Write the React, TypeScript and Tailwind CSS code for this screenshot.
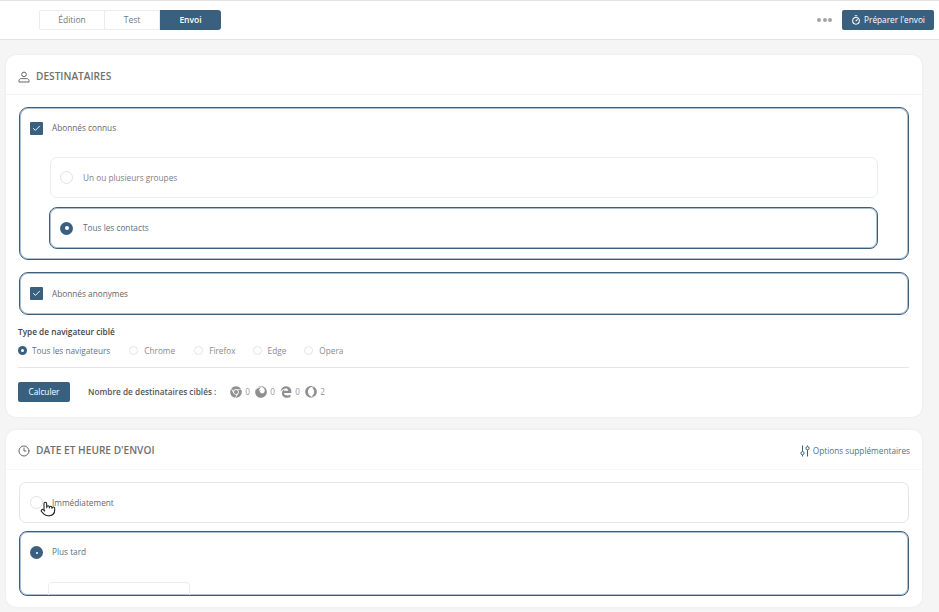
import { Check, Clock3, Pointer, Timer } from "lucide-react";
import { FaChrome, FaEdgeLegacy, FaFirefox, FaOpera } from "react-icons/fa";

function Radio({ checked }: { checked?: boolean }) {
  if (checked) {
    return (
      <span className="w-[13px] h-[13px] rounded-full bg-[#3a6080] flex items-center justify-center shrink-0">
        <span className="w-[4px] h-[4px] rounded-full bg-white" />
      </span>
    );
  }
  return <span className="w-[13px] h-[13px] rounded-full border border-[#e2e2e2] bg-white shrink-0" />;
}

function Checkbox() {
  return (
    <span className="w-[13px] h-[13px] rounded-[1px] bg-[#3a6080] flex items-center justify-center shrink-0">
      <Check size={9} color="white" strokeWidth={2.5} />
    </span>
  );
}

function Count({ value }: { value: number }) {
  return <span className="ml-[3px] mr-[5px] w-[5px]">{value}</span>;
}

function Label({ children }: { children: string }) {
  return <span className="pt-[2px]">{children}</span>;
}

export default function App() {
  const browsers = [
    { label: "Chrome", w: "mr-[19px]" },
    { label: "Firefox", w: "mr-[17px]" },
    { label: "Edge", w: "mr-[18px]" },
    { label: "Opera", w: "" },
  ];

  return (
    <div
      className="h-[612px] overflow-hidden bg-[#f5f5f5] text-[#666] relative"
      style={{ fontFamily: '"Open Sans", sans-serif' }}
    >
      {/* barre du haut */}
      <div className="h-[40px] bg-white border-t border-b border-[#e3e3e3] flex items-center justify-between pl-[39px] pr-[5px]">
        <div className="flex h-[20px] text-[8.5px]">
          <div className="w-[66px] flex items-center justify-center border border-[#ececec] rounded-l-[2px] text-[#777]">Édition</div>
          <div className="w-[55px] flex items-center justify-center border-y border-r border-[#ececec] text-[#777]">Test</div>
          <div className="w-[61px] flex items-center justify-center bg-[#3a6080] rounded-r-[3px] text-white font-semibold">Envoi</div>
        </div>
        <div className="flex items-center">
          <div className="flex gap-[1.5px] mr-[10px]">
            <span className="w-[4px] h-[4px] rounded-full bg-[#a3a3a3]" />
            <span className="w-[4px] h-[4px] rounded-full bg-[#a3a3a3]" />
            <span className="w-[4px] h-[4px] rounded-full bg-[#a3a3a3]" />
          </div>
          <button className="w-[92px] h-[20px] rounded-[2px] bg-[#3a6080] text-white text-[8.25px] flex items-center justify-center gap-[3px]">
            <Timer size={10} strokeWidth={2.5} />
            Préparer l'envoi
          </button>
        </div>
      </div>

      <div className="pl-[6px] pr-[17px] pt-[15px]">
        {/* destinataires */}
        <section className="h-[362px] bg-white rounded-[10px] shadow-[0_0_3px_rgba(0,0,0,0.06)]">
          <div className="h-[40px] pt-[4px] border-b border-[#f2f2f2] flex items-center pl-[12px] gap-[6px]">
            <svg width="12" height="12" viewBox="0 0 12 12" fill="none" stroke="#666" strokeWidth="1">
              <circle cx="6" cy="3.4" r="2.3" />
              <path d="M1 11V9.6C1 8.4 2 7.6 3.2 7.6H8.8C10 7.6 11 8.4 11 9.6V11Z" strokeLinejoin="round" />
            </svg>
            <h2 className="text-[10.15px] font-semibold text-[#70706c]">DESTINATAIRES</h2>
          </div>
          <div className="px-[13px] pt-[12px]">
            <div className="h-[153px] border border-[#3a6080] shadow-[inset_0_0_0_1px_rgba(58,96,128,0.4)] rounded-[9px] pl-[10px] pr-[30px] pt-[14px]">
              <div className="flex items-center gap-[9px] h-[13px] text-[8.25px]">
                <Checkbox />
                Abonnés connus
              </div>
              <div className="ml-[20px] mt-[22px] h-[41px] border border-[#ececec] rounded-[7px] flex items-center pl-[9px] gap-[10px] text-[8.25px] text-[#808080]">
                <Radio />
                <Label>Un ou plusieurs groupes</Label>
              </div>
              <div className="ml-[19px] mt-[9px] h-[42px] border border-[#3a6080] shadow-[inset_0_0_0_1px_rgba(58,96,128,0.4)] rounded-[8px] flex items-center pl-[10px] gap-[10px] text-[8.25px] text-[#557085]">
                <Radio checked />
                Tous les contacts
              </div>
            </div>
            <div className="mt-[12px] h-[43px] border border-[#3a6080] shadow-[inset_0_0_0_1px_rgba(58,96,128,0.4)] rounded-[9px] flex items-center pl-[10px] gap-[9px] text-[8.25px]">
              <Checkbox />
              <Label>Abonnés anonymes</Label>
            </div>
            <p className="mt-[11px] text-[8.25px] font-semibold text-[#444] -ml-px">Type de navigateur ciblé</p>
            <div className="mt-[6px] -ml-px flex items-center h-[13px] text-[8.25px] text-[#8a8a8a]">
              <span className="mr-[5px] w-[9px] h-[9px] rounded-full bg-[#3a6080] flex items-center justify-center">
                <span className="w-[3px] h-[3px] rounded-full bg-white" />
              </span>
              <span className="text-[#5f7484] mr-[19px]">Tous les navigateurs</span>
              {browsers.map((b) => (
                <div key={b.label} className={`flex items-center gap-[6px] ${b.w}`}>
                  <span className="w-[9px] h-[9px] rounded-full border border-[#e4e4e4]" />
                  {b.label}
                </div>
              ))}
            </div>
            <div className="mt-[10px] -ml-px border-t border-[#e6e6e6]" />
            <div className="mt-[14px] -ml-px flex items-center">
              <button className="w-[52px] h-[20px] rounded-[2px] bg-[#3a6080] text-white text-[8.25px]">Calculer</button>
              <span className="ml-[18px] text-[8.25px] font-semibold text-[#555]">Nombre de destinataires ciblés :</span>
              <div className="ml-[14px] flex items-center text-[8.25px] text-[#999]">
                <FaChrome size={12} className="text-[#8f8f8f]" />
                <Count value={0} />
                <FaFirefox size={12} className="text-[#8f8f8f]" />
                <Count value={0} />
                <FaEdgeLegacy size={12} className="text-[#8f8f8f]" />
                <Count value={0} />
                <FaOpera size={12} className="text-[#8f8f8f]" />
                <Count value={2} />
              </div>
            </div>
          </div>
        </section>

        {/* date et heure */}
        <section className="mt-[13px] h-[177px] bg-white rounded-[10px] shadow-[0_0_3px_rgba(0,0,0,0.06)]">
          <div className="h-[40px] pt-[3px] border-b border-[#f6f6f6] flex items-center justify-between pl-[12px] pr-[12px]">
            <div className="flex items-center gap-[6px]">
              <Clock3 size={12} className="text-[#666]" />
              <h2 className="text-[10.15px] font-semibold text-[#70706c]">DATE ET HEURE D'ENVOI</h2>
            </div>
            <div className="flex items-center gap-[3px] text-[8.25px] text-[#557085]">
              <svg width="10" height="12" viewBox="0 0 10 12" fill="none" stroke="#3a6080" strokeWidth="1">
                <path d="M2.5 0.5V6.5M2.5 10V11.5M7.5 0.5V1.5M7.5 5V11.5" />
                <circle cx="2.5" cy="8.2" r="1.6" />
                <circle cx="7.5" cy="3.2" r="1.6" />
              </svg>
              Options supplémentaires
            </div>
          </div>
          <div className="px-[13px] pt-[12px]">
            <div className="h-[41px] border border-[#e6e6e6] rounded-[7px] flex items-center pl-[10px] gap-[9px] text-[8.25px]">
              <Radio />
              <Label>Immédiatement</Label>
            </div>
            <div className="mt-[8px] h-[65px] border border-[#3a6080] shadow-[inset_0_0_0_1px_rgba(58,96,128,0.4)] rounded-[8px] overflow-hidden pl-[10px] pt-[14px]">
              <div className="flex items-center gap-[9px] h-[13px] text-[8.25px] text-[#557085]">
                <span className="w-[13px] h-[13px] rounded-full bg-[#3a6080] flex items-center justify-center">
                  <span className="w-[2px] h-[2px] rounded-full bg-white" />
                </span>
                Plus tard
              </div>
              <div className="ml-[18px] mt-[23px] w-[142px] h-[20px] border border-[#ececec] rounded-[4px]" />
            </div>
          </div>
        </section>
      </div>

      {/* curseur de la souris */}
      <div className="absolute left-[40px] top-[501px]">
        <Pointer size={16} fill="white" color="#222" strokeWidth={1.6} />
      </div>
    </div>
  );
}
